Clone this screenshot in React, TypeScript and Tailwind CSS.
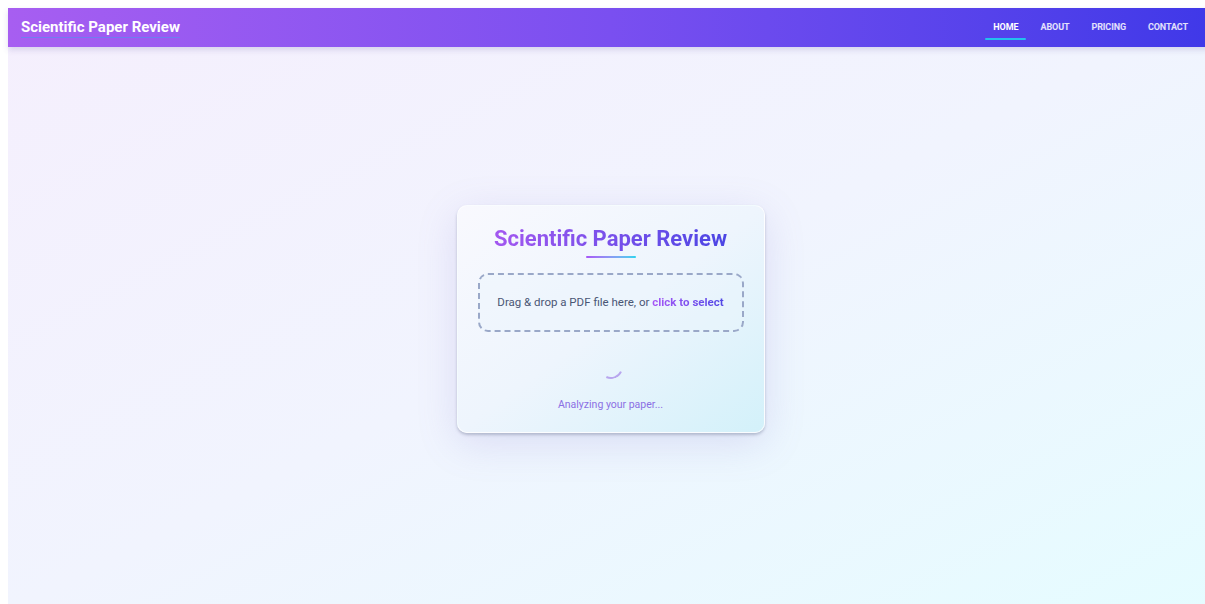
import { ReactNode } from "react";

const navLinks = ["Home", "About", "Pricing", "Contact"];

function NavItem({ label, active }: { label: string; active?: boolean }) {
  return (
    <a
      href="#"
      className={`relative px-2 py-2 text-[9px] font-bold uppercase tracking-[-0.1px] ${
        active ? "text-white" : "text-white/85"
      }`}
    >
      {label}
      {active && (
        <span className="absolute left-0 right-0 bottom-0.5 h-[2px] rounded-full bg-[#22c1ee]" />
      )}
    </a>
  );
}

function Card({ children }: { children: ReactNode }) {
  return (
    <div className="w-[308px] rounded-[10px] border border-white/70 bg-gradient-to-br from-[#f9f9fe] via-[#eef5fd] to-[#d3f1fa] px-5 pt-[18px] pb-[19px] shadow-[0_2px_3px_rgba(90,100,130,0.35),0_10px_40px_rgba(120,110,200,0.18)]">
      {children}
    </div>
  );
}

export default function App() {
  return (
    <div className="min-h-screen overflow-hidden bg-white pl-2 pt-2 font-['Roboto',sans-serif]">
      <div className="flex h-[604px] w-[1205px] flex-col bg-gradient-to-br from-[#f5effd] via-[#f1f4fe] to-[#e5fcff]">
        {/* Top bar */}
        <header className="relative z-10 flex h-[39px] shrink-0 items-center justify-between bg-gradient-to-r from-[#a75ef1] via-[#7a4ff0] to-[#3f38e8] pl-[13px] pr-[17px] shadow-[0_3px_6px_rgba(90,80,160,0.18)]">
          <a
            href="#"
            className="text-[15px] font-bold text-white underline decoration-[#5b8cf0]/70 decoration-1 underline-offset-[5px]"
          >
            Scientific Paper Review
          </a>
          <nav className="flex items-center gap-[6px]">
            {navLinks.map((l, i) => (
              <NavItem key={l} label={l} active={i === 0} />
            ))}
          </nav>
        </header>

        {/* Upload area */}
        <main className="flex flex-1 items-start justify-center pt-[158px]">
          <Card>
            <div className="flex flex-col items-center">
              <h1 className="bg-gradient-to-r from-[#a357f0] to-[#4b45e4] bg-clip-text text-[22px] leading-[30px] font-bold text-transparent">
                Scientific Paper Review
              </h1>
              <div className="mt-[2px] h-[2px] w-[50px] rounded-full bg-gradient-to-r from-[#a855f7] to-[#22d3ee]" />
            </div>

            <div className="mt-[15px] flex h-[59px] items-center justify-center rounded-[10px] border-2 border-dashed border-[#9aa8c8] bg-[#eaf6fd]/40">
              <p className="text-[11.5px] text-[#4a5675]">
                Drag &amp; drop a PDF file here, or{" "}
                <span className="bg-gradient-to-r from-[#a855f7] to-[#4f46e5] bg-clip-text font-bold text-transparent">
                  click to select
                </span>
              </p>
            </div>

            <div className="mt-[23px] flex flex-col items-center">
              <div className="h-6 w-6 -rotate-[20deg] rounded-full border-2 border-transparent border-b-[#b8a6ee]" />
              <p className="mt-[18px] text-[10.5px] text-[#8b6fe4]">
                Analyzing your paper...
              </p>
            </div>
          </Card>
        </main>
      </div>
    </div>
  );
}
